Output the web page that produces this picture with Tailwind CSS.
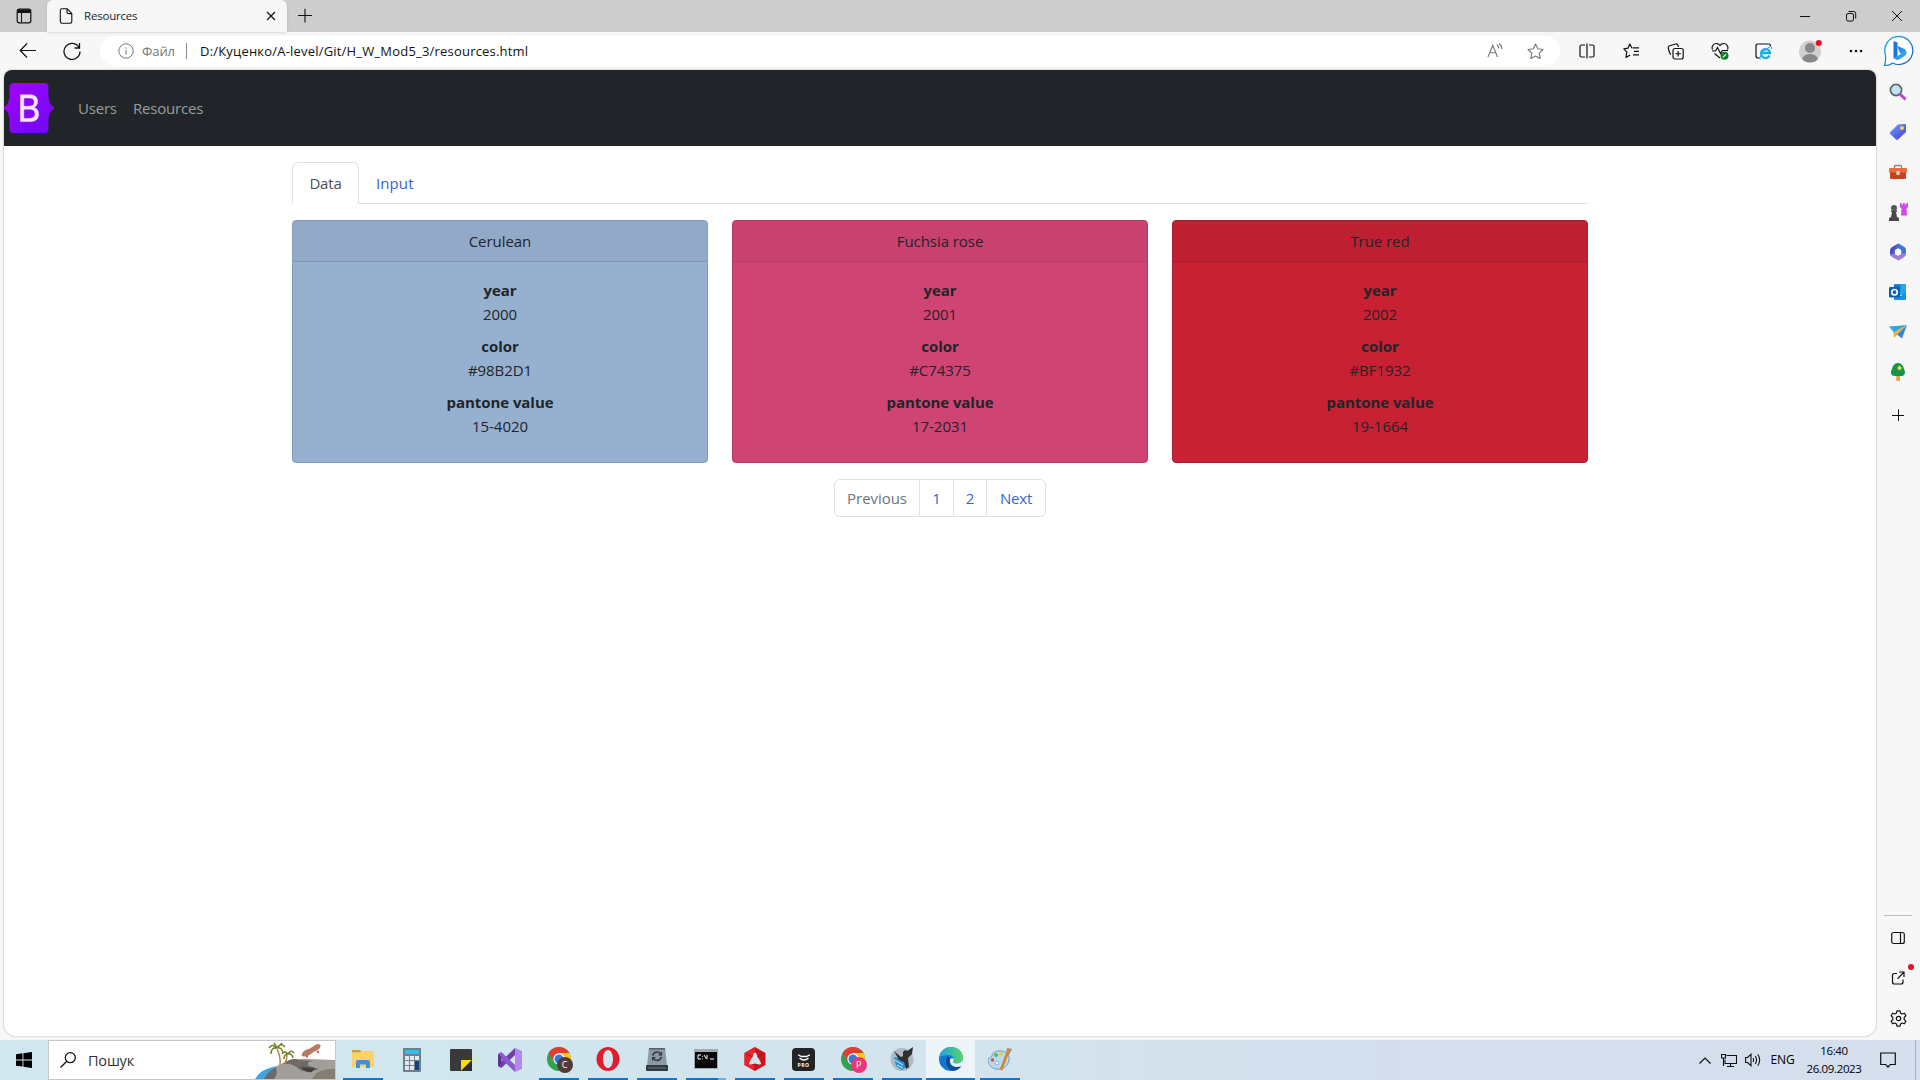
<!DOCTYPE html>
<html lang="uk">
<head>
<meta charset="utf-8">
<title>Resources</title>
<script src="https://cdn.jsdelivr.net/npm/@tailwindcss/browser@4"></script>
</head>
<body class="flex h-screen w-screen flex-col overflow-hidden bg-[#f7f7f7] font-['Open_Sans',sans-serif] text-[15px] leading-6 tracking-[-0.2px] text-[#212529]">

<!-- Tab strip -->
<header class="flex h-8 shrink-0 items-stretch bg-[#cdcdcd]">
  <div class="flex w-[47px] items-center justify-center">
    <svg class="size-4" viewBox="0 0 16 16"><rect x="1.2" y="1.2" width="13.6" height="13.6" rx="2" fill="none" stroke="#111" stroke-width="1.2"/><path d="M1.5 2.5q0-1 1-1h11q1 0 1 1V5h-13z" fill="#111"/><path d="M5.5 5v9.5" stroke="#111"/></svg>
  </div>
  <div class="flex w-[240px] items-center rounded-t-md bg-[#f7f7f7] pr-2 pl-3 shadow-sm">
    <svg class="h-4 w-[14px]" viewBox="0 0 14 16" fill="none" stroke="#111" stroke-width="1.1"><path d="M3 .8h5.2L12.8 5.4V13.500q0 1.700-1.700 1.700H3q-1.700 0-1.700-1.700V2.500Q1.300.8 3 .8zM8 .8v3.200q0 1.600 1.600 1.600h3.200"/></svg>
    <span class="ml-[11px] flex-1 text-[11.500px]">Resources</span>
    <svg class="size-4" viewBox="0 0 16 16" stroke="#111" stroke-width="1.2"><path d="M4 4l8 8M12 4l-8 8"/></svg>
  </div>
  <div class="flex w-[35px] items-center justify-center">
    <svg class="size-4" viewBox="0 0 16 16" stroke="#111" stroke-width="1.1"><path d="M1 7.500h14M8 .8v13.600"/></svg>
  </div>
  <div class="flex-1"></div>
  <div class="flex w-[46px] items-center justify-center"><svg class="size-3" viewBox="0 0 12 12" stroke="#111"><path d="M1 6.500h10"/></svg></div>
  <div class="flex w-[46px] items-center justify-center"><svg class="size-3" viewBox="0 0 12 12" fill="none" stroke="#111"><rect x="1.500" y="3.500" width="7" height="7.500" rx="1.500"/><path d="M3.500 1.500h5.200q2 0 2 2v5"/></svg></div>
  <div class="flex w-[46px] items-center justify-center"><svg class="size-3" viewBox="0 0 12 12" stroke="#111"><path d="M1 1l10 10M11 1L1 11"/></svg></div>
</header>

<!-- Toolbar -->
<div class="flex h-[38px] shrink-0 items-center pl-[6px]">
  <div class="flex w-11 justify-center"><svg class="size-5" viewBox="0 0 20 20" fill="none" stroke="#111" stroke-width="1.2"><path d="M18 9.500H2.500M9 2.500L2.200 9.500 9 16.500"/></svg></div>
  <div class="flex w-11 justify-center"><svg class="size-5" viewBox="0 0 20 20" fill="none" stroke="#111" stroke-width="1.300"><path d="M17 6.500A8 8 0 1 0 18 10.500M17.500 2v5h-5"/></svg></div>
  <div class="ml-[6px] flex h-[30px] w-[1460px] items-center rounded-full bg-white pr-4 pl-[18px] text-[13px] tracking-[0.200px]">
    <svg class="size-4" viewBox="0 0 16 16" fill="none" stroke="#777"><circle cx="8" cy="8" r="7.200"/><path d="M8 7v4.500M8 4.300v1.400"/></svg>
    <span class="ml-2 w-[35px] tracking-[-0.100px] text-[#767676]">Файл</span>
    <span class="ml-[9px] h-4 w-px bg-[#888]"></span>
    <span class="ml-[13px] flex-1 text-[#111]">D:/Куценко/A-level/Git/H_W_Mod5_3/resources.html</span>
    <svg class="mr-6 size-4" viewBox="0 0 16 16" fill="none" stroke="#777" stroke-width="1.1"><path d="M1 14L5.800 2.200 10.500 14M2.800 9.800h6M9.800 1.500q2 1.500 2 4M12 .5q3 2 3 5.500"/></svg>
    <svg class="size-[17px]" viewBox="0 0 17 17" fill="none" stroke="#777" stroke-width="1.1" stroke-linejoin="round"><path d="M8.500 1l2.300 4.800 5.200.7-3.800 3.700.9 5.200-4.600-2.500-4.600 2.500.9-5.200L1 6.500l5.200-.7z"/></svg>
  </div>
  <div class="ml-1 flex w-[45px] justify-center"><svg class="size-4" viewBox="0 0 16 16" fill="none" stroke="#111" stroke-width="1.200"><path d="M6 2H2.500Q1 2 1 3.500v9Q1 14 2.500 14H6M10 2h3.500Q15 2 15 3.500v9q0 1.500-1.500 1.500H10M8 .5v15"/></svg></div>
  <div class="flex w-[45px] justify-center"><svg class="h-4 w-[17px]" viewBox="0 0 17 16" fill="none" stroke="#111" stroke-width="1.200"><path d="M9.500 4.800H8.800L6.800 1 5 5.200.8 5.800l3 3-.8 5.600 4.200-2.500M10 4.800h6M11 8.300h5M10 11.800h6" stroke-linejoin="round"/></svg></div>
  <div class="flex w-[43px] justify-center"><svg class="size-[17px]" viewBox="0 0 17 17" fill="none" stroke="#111" stroke-width="1.200"><path d="M4 11.500Q3 11 2.500 9.500L1.300 5Q1 3.300 2.600 2.800L8.800 1q1.700-.3 2.200 1.300l.5 1.700"/><rect x="6" y="5.500" width="10.200" height="10.500" rx="2"/><path d="M11.100 8v5.500M8.400 10.750h5.500"/></svg></div>
  <div class="flex w-[45px] justify-center"><svg class="size-[18px]" viewBox="0 0 18 18" fill="none" stroke="#111" stroke-width="1.200"><path d="M1.500 7.500C0 4 3 1 6 1.600Q8 2 9 3.500 10 2 12 1.600c3-.6 6 2.400 4.500 5.900M1 9h3.500l2-3.500 3 6 1.700-3H17M3.500 11.500L9 16"/><circle cx="13.500" cy="13.800" r="4" fill="#107c28" stroke="none"/><path d="M11.800 15.400l3.200-3" stroke="#fff"/></svg></div>
  <div class="flex w-[43px] justify-center"><svg class="size-[17px]" viewBox="0 0 17 17" fill="none"><path d="M5 15H3Q1 15 1 13V3Q1 1 3 1h10.500Q15.500 1 15.500 3" stroke="#111" stroke-width="1.200"/><path d="M14.600 12.500A4.500 4.500 0 1 1 15 10H7" stroke="#1aaee8" stroke-width="2.300"/><path d="M5.500 16.500C3.500 15 8 7 15.500 3.500q2 0 .8 2.500" stroke="#1aaee8"/></svg></div>
  <div class="flex w-[49px] justify-center"><svg class="size-6" viewBox="0 0 24 24"><circle cx="12" cy="12.500" r="11" fill="#d2d0ce"/><circle cx="12" cy="9" r="5" fill="#8a8886"/><path d="M4 20q2-5 8-5t8 5q-3 3.500-8 3.500T4 20z" fill="#8a8886"/><circle cx="20.800" cy="4" r="3" fill="#e81123"/></svg></div>
  <div class="flex w-[43px] justify-center"><svg class="h-1 w-[14px]" viewBox="0 0 14 4" fill="#111"><circle cx="2" cy="2" r="1.300"/><circle cx="7" cy="2" r="1.300"/><circle cx="12" cy="2" r="1.300"/></svg></div>
  <div class="flex flex-1 justify-center">
    <svg class="size-8" viewBox="0 0 32 32"><defs><linearGradient id="bg1" x1="0" y1="0" x2="1" y2="1"><stop offset="0" stop-color="#1fb8e6"/><stop offset="1" stop-color="#2850c0"/></linearGradient><linearGradient id="bg2" x1="0" y1="0" x2="1" y2="1"><stop offset="0" stop-color="#1c62e0"/><stop offset="1" stop-color="#35c8ef"/></linearGradient></defs><path d="M16 1.500A14 14 0 1 1 9.500 28Q6 31 1.500 30.300 3 27 2.500 20A14 14 0 0 1 16 1.500z" fill="#fff" stroke="url(#bg1)" stroke-width="1.300"/><path d="M10.500 6l4 1.500v13.800l-4 2z" fill="#1c74e4"/><path d="M14.500 11l7 3q2.500 1.500 2 4.500-.5 2-2.500 3l-6.500 3.800-4-2 7.500-4.300-1.800-2.500z" fill="url(#bg2)"/></svg>
  </div>
</div>

<!-- Page and browser sidebar -->
<div class="flex h-[970px] shrink-0 pl-1">
  <main class="mb-[4px] w-[1872px] overflow-hidden rounded-xl rounded-t-lg bg-white shadow-[0_0_2px_rgba(0,0,0,0.35)]">
    <nav class="flex h-[76px] items-center bg-[#212529] text-[#9b9d9e]">
      <svg class="h-[50px] w-[50px]" viewBox="0 0 50 50"><defs><linearGradient id="bs" x1="0" y1="0" x2="1" y2="1"><stop offset="0" stop-color="#a105fb"/><stop offset="1" stop-color="#6f08f6"/></linearGradient></defs><path d="M9.500 0h31q4 0 4 4.500C44 13 44.500 22 50 24v2c-5.500 2-6 11-5.500 19.500q0 4.500-4 4.500h-31q-4 0-4-4.500C6 37 5.500 28 0 26v-2c5.500-2 6-11 5.500-19.500Q5.500 0 9.500 0z" fill="url(#bs)"/><path fill-rule="evenodd" d="M16.500 11.800H26c5 0 7.600 2.700 7.600 6.800 0 3-1.500 5.300-4 5.900 3.200.5 5 3.200 5 6.500 0 4.900-3 7.600-8.400 7.600h-9.700zM19.800 15v8.200h4.500c4 0 6-1.300 6-4.200 0-2.600-1.700-4-4.900-4zm0 11.200v9.200h5.600c3.800 0 5.700-1.500 5.700-4.600s-2-4.600-6.100-4.600z" fill="#fbe6ff" stroke="#fbe6ff" stroke-width=".5"/></svg>
      <a class="ml-6 w-[39px]">Users</a><a class="ml-4">Resources</a>
    </nav>
    <section class="mx-auto mt-4 w-[1296px]">
      <div class="flex border-b border-[#dee2e6]">
        <a class="-mb-px w-[67px] rounded-t-md border border-b-0 border-[#dee2e6] bg-white pt-2 pb-[9px] text-center text-[#495057]">Data</a>
        <a class="px-[17px] pt-[9px] pb-2 tracking-[0.100px] text-[#3563dd]">Input</a>
      </div>
      <div class="mt-4 grid grid-cols-3 gap-6 text-center tracking-[-0.050px]">
        <article class="h-[243px] rounded border border-[#809db8] bg-[#96b0d0]">
          <h2 class="border-b border-[#7c96b8] bg-[#92a9c8] py-2">Cerulean</h2>
          <dl class="p-4">
            <dt class="font-bold">year</dt><dd class="mb-2">2000</dd>
            <dt class="font-bold">color</dt><dd class="mb-2">#98B2D1</dd>
            <dt class="font-bold">pantone value</dt><dd class="mb-2">15-4020</dd>
          </dl>
        </article>
        <article class="h-[243px] rounded border border-[#b43b66] bg-[#d04474]">
          <h2 class="border-b border-[#b13d66] bg-[#c8416f] py-2">Fuchsia rose</h2>
          <dl class="p-4">
            <dt class="font-bold">year</dt><dd class="mb-2">2001</dd>
            <dt class="font-bold">color</dt><dd class="mb-2">#C74375</dd>
            <dt class="font-bold">pantone value</dt><dd class="mb-2">17-2031</dd>
          </dl>
        </article>
        <article class="h-[243px] rounded border border-[#a81e30] bg-[#c72133]">
          <h2 class="border-b border-[#a51c2c] bg-[#bf2031] py-2">True red</h2>
          <dl class="p-4">
            <dt class="font-bold">year</dt><dd class="mb-2">2002</dd>
            <dt class="font-bold">color</dt><dd class="mb-2">#BF1932</dd>
            <dt class="font-bold">pantone value</dt><dd class="mb-2">19-1664</dd>
          </dl>
        </article>
      </div>
      <div class="mt-4 flex justify-center text-center text-[#3563dd]">
        <div class="flex h-[38px] w-[212px] divide-x divide-[#dee2e6] rounded-md border border-[#dee2e6] leading-9">
          <a class="w-[85px] tracking-[-0.050px] text-[#6c757d]">Previous</a><a class="w-[34px]">1</a><a class="w-[33px]">2</a><a class="flex-1">Next</a>
        </div>
      </div>
    </section>
  </main>

  <aside class="flex flex-1 flex-col items-center pt-[2px]">
    <div class="flex h-10 items-center"><svg class="size-[18px]" viewBox="0 0 18 18"><path d="M11.500 11.500l5 5" stroke="#c83be0" stroke-width="3"/><circle cx="7" cy="7" r="5.600" fill="#c4e2f5" stroke="#59636b" stroke-width="1.700"/></svg></div>
    <div class="flex h-10 items-center"><svg class="size-[18px]" viewBox="0 0 18 18"><defs><linearGradient id="tg" x1="0" y1="0" x2="1" y2="1"><stop offset="0" stop-color="#6aa8f8"/><stop offset="1" stop-color="#4b35dc"/></linearGradient></defs><path d="M9 1.500L16 1q1 0 1 1v7l-8 7.500q-1 .8-2 0L1.200 11q-.8-1 0-2z" fill="url(#tg)"/><circle cx="13" cy="5" r="2" fill="#ffd43b"/></svg></div>
    <div class="flex h-10 items-center"><svg class="size-[18px]" viewBox="0 0 18 18"><path d="M5.500 6V3.500q0-1 1-1h5q1 0 1 1V6" fill="none" stroke="#838a90" stroke-width="1.400"/><rect y="5" width="18" height="5" rx="1.300" fill="#ef6b3b"/><path d="M1 9.500h16v5q0 1.500-1.500 1.500h-13Q1 16 1 14.500z" fill="#c8421d"/><rect x="7.300" y="8" width="3.500" height="4" rx=".8" fill="#ccd0d2"/></svg></div>
    <div class="flex h-10 items-center"><svg class="h-[18px] w-5" viewBox="0 0 20 18"><path d="M12 0h1.500v1.500H15V0h1.800v1.500h1.500V0H20v4l-1.500 1.500.5 7h-6l.5-7L12 4z" fill="#d04bea"/><circle cx="6" cy="5" r="3" fill="#555"/><path d="M3 7.500h6V9H8l1 5 2 1V18H1v-3l2-1L4 9H3z" fill="#484848"/></svg></div>
    <div class="flex h-10 items-center"><svg class="size-[18px]" viewBox="0 0 18 18"><path d="M9.500.5L3 4Q1 5.200 1 7.500v5l5-1.500V7l5-3z" fill="#4e50be"/><path d="M9.500.5l6 3.500Q17 5 17 7v4.500l-5-1V6.800L6.500 4z" fill="#3f77d8"/><path d="M17 10.500q0 2.500-2 3.700L9.500 17.500 3 14l-2-2.500 5-.5 3 1.800 3-1.800z" fill="#a07bdc"/><path d="M9 5.500l3.200 1.800v3.500L9 12.800l-3.200-2V7.300z" fill="#f8f8fb"/></svg></div>
    <div class="flex h-10 items-center"><svg class="size-[18px]" viewBox="0 0 18 18"><rect x="5" y="1" width="12" height="11" rx="1" fill="#28a8ea"/><path d="M5 1.500h6.500V8H5z" fill="#0f78d4"/><path d="M5 9l7 4 5-4.500V16q0 1-1 1H5z" fill="#1490df"/><rect y="4" width="11" height="10.500" rx="1.200" fill="#0c62b8"/><circle cx="5.500" cy="9.200" r="2.700" fill="none" stroke="#fff" stroke-width="1.600"/></svg></div>
    <div class="flex h-10 items-center"><svg class="size-[18px]" viewBox="0 0 18 18"><path d="M0 3.500L18 2 5 9.500z" fill="#28a9e0"/><path d="M4.500 9.500L18 2l-9 9-4 4z" fill="#f3ad3c"/><path d="M18 2l-5 13.500-5-4z" fill="#3187dc"/></svg></div>
    <div class="flex h-10 items-center"><svg class="size-[18px]" viewBox="0 0 18 18"><rect x="7.200" y="11" width="3.800" height="7" rx="1" fill="#e8a64b"/><path d="M9 0Q14 .5 15 6q1.800 3 .5 5.500-1.500 2-4 1.500H6q-3 0-4-2.500Q1.500 8 3 6 4 .5 9 0z" fill="#189447"/><path d="M10.500 2.500L13 5l-2.500 2.500L8 5z" fill="#ffd64b"/></svg></div>
    <div class="flex h-[46px] items-center"><svg class="size-3" viewBox="0 0 12 12" stroke="#111"><path d="M0 6.500h12M6.500 .5v12"/></svg></div>
    <div class="flex-1"></div>
    <div class="h-px w-7 bg-[#bdbdbd]"></div>
    <div class="mt-[2px] flex h-10 items-center"><svg class="size-[14px]" viewBox="0 0 14 14" fill="none" stroke="#111" stroke-width="1.200"><rect x=".7" y="1.500" width="12.600" height="11" rx="2"/><path d="M9.500 1.500v11"/></svg></div>
    <div class="relative flex h-10 items-center"><svg class="size-[14px]" viewBox="0 0 14 14" fill="none" stroke="#111" stroke-width="1.200"><path d="M6 2.500H3.500Q1.500 2.500 1.500 4.500v6.500q0 2 2 2H10q2 0 2-2V8.500M8 1h5v5M13 1L6.500 7.800"/></svg><span class="absolute top-[6px] left-[17px] size-[6px] rounded-full bg-[#e81123]"></span></div>
    <div class="mb-[2px] flex h-10 items-center"><svg class="size-[17px]" viewBox="0 0 17 17" fill="none" stroke="#111" stroke-width="1.200" stroke-linejoin="round"><circle cx="8.500" cy="8.500" r="2.200"/><path d="M7 .8h3l.5 2.200 1.700 1 2.200-.8 1.500 2.600-1.700 1.600v2.200l1.700 1.600-1.500 2.600-2.200-.8-1.700 1-.5 2.200H7L6.500 14l-1.700-1-2.200.8-1.500-2.600 1.700-1.600V7.400L1.100 5.800l1.500-2.600 2.200.8 1.700-1z"/></svg></div>
  </aside>
</div>

<!-- Windows taskbar -->
<footer class="flex h-10 shrink-0 items-stretch bg-linear-to-r from-[#d0e7ef] via-[#d2e4ee] via-50% to-[#d4deed] to-75% text-black">
  <div class="flex w-12 items-center justify-center"><svg class="size-4" viewBox="0 0 16 16"><path d="M0 2.200L6.500 1.300v6.200H0zM7.400 1.200L16 0v7.500H7.400zM0 8.400h6.500v6.200L0 13.800zM7.400 8.400H16V16l-8.600-1.200z"/></svg></div>
  <div class="flex w-72 items-center border border-[#c4c8ca] bg-white pl-[11px]">
    <svg class="size-4" viewBox="0 0 16 16" fill="none" stroke="#111" stroke-width="1.300"><circle cx="10.300" cy="5.700" r="5"/><path d="M6.800 9.200L.5 15.500"/></svg>
    <span class="ml-3 flex-1 pt-[2px] text-[14.500px] text-[#333]">Пошук</span>
    <svg class="h-[38px] w-20" viewBox="0 0 80 38"><path d="M0 38Q5 28 22 25l12 13z" fill="#3aa5e0"/><path d="M9 38q8-13 20-16Q40 17 54 18l26 1v19z" fill="#a29e99"/><path d="M27 23q10-7 17-4l14 1q-8 1-4 5l10 3q-14 5-20 0-6-6-17-5zM9 38q5-9 12-12 2 8-2 12z" fill="#6f6a66"/><path d="M46 26l14 1-3 4q-8 1-11-5z" fill="#45413f"/><path d="M57 38q5-11 23-10v10z" fill="#837d72"/><path d="M22 8q4 8 3 16M32 14q0 5-2 8" stroke="#b48752" stroke-width="1.500" fill="none"/><path d="M22 7q-5-5-8 0M22 7q4-6 8-1M22 7q-6-1-6 6M22 7q5-1 6 5M22 7l-3-5M22 7l5-5M33 13q-4-4-6 0M33 13q3-5 6-1M33 13q-4 0-4 5M33 13q4-1 5 4" stroke="#6f812a" stroke-width="1.500" fill="none"/><path d="M47 12.500Q50 8 54 8l7-4.500Q65 2 65.500 4.500T62 9.500q-4 1-6 3.500-4 3-7.500 2.500-2.500-.5-1.500-3z" fill="#b57d63"/><path d="M51 15.500h2M62 11.500l2-1" stroke="#dc5470" stroke-width="2"/></svg>
  </div>
  <div class="flex pl-[2px]">
    <div class="flex w-[49px] flex-col items-center"><div class="flex h-[38px] items-center"><svg class="h-5 w-[22px]" viewBox="0 0 22 20"><path d="M0 2q0-1 1-1h7l2 2.500H0z" fill="#d99f1d"/><path d="M0 4h8l2-2h10.500Q22 2 22 3.500V17q0 1-1 1H1q-1 0-1-1z" fill="#fbd265"/><path d="M4 19v-6q0-2 2-2h10q2 0 2 2v6h-4v-3.500H8V19z" fill="#3f93d2"/></svg></div><span class="h-[2px] w-10 bg-[#0f76ce]"></span></div>
    <div class="flex w-[49px] flex-col items-center"><div class="flex h-10 items-center"><svg class="h-6 w-[18px]" viewBox="0 0 18 24"><rect width="18" height="24" rx="1" fill="#70808d"/><rect x="2" y="2" width="14" height="4" fill="#35bdeb"/><g fill="#e3eaef"><path d="M2 8h4v4H2zM7 8h4v4H7zM12 8h4v4h-4zM2 13h4v4H2zM7 13h4v4H7zM2 18h4v4H2zM7 18h4v4H7z"/></g><path d="M12 13h4v9h-4z" fill="#15417d"/></svg></div></div>
    <div class="flex w-[49px] flex-col items-center"><div class="flex h-10 items-center"><svg class="size-[22px]" viewBox="0 0 22 22"><rect width="22" height="22" rx="1" fill="#393939"/><path d="M11 11h11L11 22z" fill="#fddb0b"/><path d="M22 11v11H11z" fill="#2c2c2c"/></svg></div></div>
    <div class="flex w-[49px] flex-col items-center"><div class="flex h-10 items-center"><svg class="size-6" viewBox="0 0 24 24"><path d="M17 0l7 3v18l-7 3z" fill="#b387ec"/><path d="M17 0v7L5 18.500 3 20l-3-2v-1.500z" fill="#6b43a6"/><path d="M17 24v-7L5 5.500 3 4 0 6v1.500z" fill="#8c59cf"/><path d="M0 6l3.500 2.500v7L0 18z" fill="#59348e"/></svg></div></div>
    <div class="flex w-[49px] flex-col items-center"><div class="relative flex h-[38px] items-center"><svg class="size-6" viewBox="0 0 24 24"><circle cx="12" cy="12" r="12" fill="#32a251"/><path d="M1.600 6A12 12 0 0 1 22.400 6L12 7 7 15z" fill="#df3f32"/><path d="M22.400 6A12 12 0 0 1 12 24l5-9-5-9z" fill="#fbc91c"/><circle cx="12" cy="12" r="5.700" fill="#fff"/><circle cx="12" cy="12" r="4.500" fill="#317be5"/></svg><span class="absolute top-[17px] left-[10px] size-4 rounded-full bg-[#553b36] text-center text-[9px] leading-4 text-white">C</span></div><span class="h-[2px] w-10 bg-[#0f76ce]"></span></div>
    <div class="flex w-[49px] flex-col items-center"><div class="flex h-[38px] items-center"><svg class="size-6" viewBox="0 0 24 24"><path fill-rule="evenodd" d="M12 0a11.500 12 0 1 0 0 24 11.500 12 0 1 0 0-24zm0 3c3 0 5 4 5 9s-2 9-5 9-5-4-5-9 2-9 5-9z" fill="#de1e2e"/></svg></div><span class="h-[2px] w-10 bg-[#0f76ce]"></span></div>
    <div class="flex w-[49px] flex-col items-center"><div class="flex h-[38px] items-center"><svg class="h-6 w-[22px]" viewBox="0 0 22 24"><path d="M3 1h16l2 17H1z" fill="#8c9aa3"/><path d="M3 1h16v1.500H3z" fill="#56626a"/><rect y="18" width="22" height="6" rx="1" fill="#313a41"/><path d="M2 21h18" stroke="#6a747b"/><path d="M6.500 8.500Q8 5 11 5q2 0 3.500 1.500M15.500 10Q14 13.500 11 13.500q-2 0-3.500-1.500" stroke="#2e3a42" stroke-width="1.600" fill="none"/><path d="M16 4.500v4h-4zM6 14v-4h4z" fill="#2e3a42"/></svg></div><span class="h-[2px] w-10 bg-[#0f76ce]"></span></div>
    <div class="flex w-[49px] flex-col items-center"><div class="flex h-[38px] items-center"><svg class="h-5 w-6" viewBox="0 0 24 20"><rect width="24" height="20" fill="#a4abaf"/><path d="M1 3h22v16H1z" fill="#080808"/><path d="M7 6H4v4h3M8.500 7v.8M8.500 9.500v.8M10 6l2.500 4M13 6v4M16 10h4" stroke="#fff" fill="none"/></svg></div><span class="flex h-[2px] w-10 bg-[#0f76ce]"><span class="ml-auto w-2 bg-[#69aee2]"></span></span></div>
    <div class="flex w-[49px] flex-col items-center"><div class="flex h-[38px] items-center"><svg class="size-6" viewBox="0 0 24 24"><path d="M12 0l10.500 6v12L12 24 1.500 18V6z" fill="#c9151d"/><path d="M12 0v6L9 12l-4 5 7 2v5L1.500 18V6z" fill="#e6262b"/><path d="M12 5.500q1.500 0 2 3l4 7.500q.5 2-2 1.500L12 16.500l-4 1q-2.500.5-2-1.500l4-7.500q.5-3 2-3z" fill="#d0e4ee"/><path d="M12 17v6M3 7l7 3M21 7l-7 3" stroke="#9f0e15" stroke-width=".8"/></svg></div><span class="h-[2px] w-10 bg-[#0f76ce]"></span></div>
    <div class="flex w-[49px] flex-col items-center"><div class="flex h-[38px] items-center"><div class="flex size-[23px] flex-col items-center rounded bg-[#202425] pt-[6px] text-white"><svg class="h-[7px] w-3" viewBox="0 0 12 7" fill="none" stroke="#fff" stroke-width="1.300"><path d="M0 .8l3.500 1.700h5L12 .8M1.500 4Q6 8 10.500 4"/></svg><span class="mt-[1px] text-[5px] leading-[6px] font-bold tracking-[0.500px]">PRO</span></div></div><span class="h-[2px] w-10 bg-[#0f76ce]"></span></div>
    <div class="flex w-[49px] flex-col items-center"><div class="relative flex h-[38px] items-center"><svg class="size-6" viewBox="0 0 24 24"><circle cx="12" cy="12" r="12" fill="#32a251"/><path d="M1.600 6A12 12 0 0 1 22.400 6L12 7 7 15z" fill="#df3f32"/><path d="M22.400 6A12 12 0 0 1 12 24l5-9-5-9z" fill="#fbc91c"/><circle cx="12" cy="12" r="5.700" fill="#fff"/><circle cx="12" cy="12" r="4.500" fill="#317be5"/></svg><span class="absolute top-[17px] left-[10px] size-4 rounded-full bg-[#e9397b] text-center text-[9px] leading-4 text-white">P</span></div><span class="h-[2px] w-10 bg-[#0f76ce]"></span></div>
    <div class="flex w-[49px] flex-col items-center"><div class="flex h-[38px] items-center"><svg class="size-6" viewBox="0 0 24 24"><circle cx="12" cy="12.500" r="11.500" fill="#afbac2"/><path d="M4 10l9 2 4 7-5 4-6-4z" fill="#238fd4"/><path d="M4 4l7 6 2-1V5l2-2 2 1 6-4-1 7-4 4 1 9-3 2-2-7-5-2z" fill="#2e3133"/><path d="M5 13l8 5M7 18l6 3" stroke="#e8edf0"/></svg></div><span class="h-[2px] w-10 bg-[#0f76ce]"></span></div>
    <div class="flex w-[49px] flex-col items-center bg-[#edf4f8]"><div class="flex h-[38px] items-center"><svg class="size-6" viewBox="0 0 24 24"><defs><linearGradient id="e1" x1="0" y1="0" x2="1" y2="0"><stop offset="0" stop-color="#1da5e1"/><stop offset="1" stop-color="#57d467"/></linearGradient></defs><circle cx="12" cy="12" r="12" fill="#1478ce"/><path d="M.3 10.500C2 3 7 0 12 0c7 0 12 5 12 10.500 0 4-3 6-6.500 6-3 0-4-1-3.500-2 2-3 0-6.500-5-6.500C4.500 8 2 9 .3 10.500z" fill="url(#e1)"/><path d="M9 9c-4 4-2 13 5 14.800 4 0 7-2.300 8.500-4.800-7 3-13-.5-11.500-6.500z" fill="#104d98"/><path d="M14.200 14.300c-.8 1.200 0 2.200 3.300 2.200 3 0 5.500-1.500 6.300-4 .5 3-.3 5-1.300 6.500-6 2.500-12-.5-11.500-6 .3-1.600 2.500-2.500 3.500-1 .5.800.2 1.500-.3 2.300z" fill="#edf4f8"/></svg></div><span class="h-[2px] w-full bg-[#0f76ce]"></span></div>
    <div class="flex w-[49px] flex-col items-center"><div class="flex h-[38px] items-center"><svg class="size-6" viewBox="0 0 24 24"><path d="M10 4c7-1 12 3 11 9-1 7-7 10-13 9-5-1-8-5-8-9 0-3 3-1 4-4 0-3 3-4.500 6-5z" fill="#b9dcf0" stroke="#6a9dc0"/><circle cx="8" cy="8" r="2" fill="#61b853"/><circle cx="13" cy="7" r="2" fill="#f1c940"/><circle cx="4.500" cy="13" r="1.800" fill="#e0503c"/><circle cx="9" cy="16" r="2" fill="#eef6fa" stroke="#6a9dc0" stroke-width=".7"/><path d="M19 7l-6 16" stroke="#d8842c" stroke-width="2.800"/><path d="M18 7l1-6 5 1-3 6z" fill="#b8895a"/></svg></div><span class="h-[2px] w-10 bg-[#0f76ce]"></span></div>
  </div>
  <div class="flex-1"></div>
  <div class="flex w-6 items-center justify-center"><svg class="h-[7px] w-3" viewBox="0 0 12 7" fill="none" stroke="#111" stroke-width="1.200"><path d="M.5 6.500L6 1l5.500 5.500"/></svg></div>
  <div class="flex w-6 items-center justify-center"><svg class="size-4" viewBox="0 0 16 16" fill="none" stroke="#111" stroke-width="1.100"><path d="M5.500 3.500h10v8H4v-4M9.500 11.500v3M6 14.500h7M.5 2.500h4v3.500h-4zM2.500 6v8"/></svg></div>
  <div class="flex w-6 items-center justify-center"><svg class="size-4" viewBox="0 0 16 16" fill="none" stroke="#111" stroke-width="1.100"><path d="M.6 5.500h2L6 2.300v11.400L2.600 10.500h-2zM8 6q1.200 2 0 4M10.300 4q2.500 4 0 8M12.700 2.300q4 5.700 0 11.400"/></svg></div>
  <div class="flex w-[35px] items-center justify-center text-xs">ENG</div>
  <div class="flex w-[68px] flex-col items-center justify-center text-[11.500px] leading-[18px] tracking-[-0.350px]"><span>16:40</span><span>26.09.2023</span></div>
  <div class="flex w-[39px] items-center justify-center"><svg class="size-4" viewBox="0 0 16 16" fill="none" stroke="#111" stroke-width="1.200"><path d="M.7 1h14.600v11.500h-5L8 15l-2.300-2.500h-5z"/></svg></div>
  <div class="ml-2 w-[5px] border-l border-[#a6b0be]"></div>
</footer>
</body>
</html>
